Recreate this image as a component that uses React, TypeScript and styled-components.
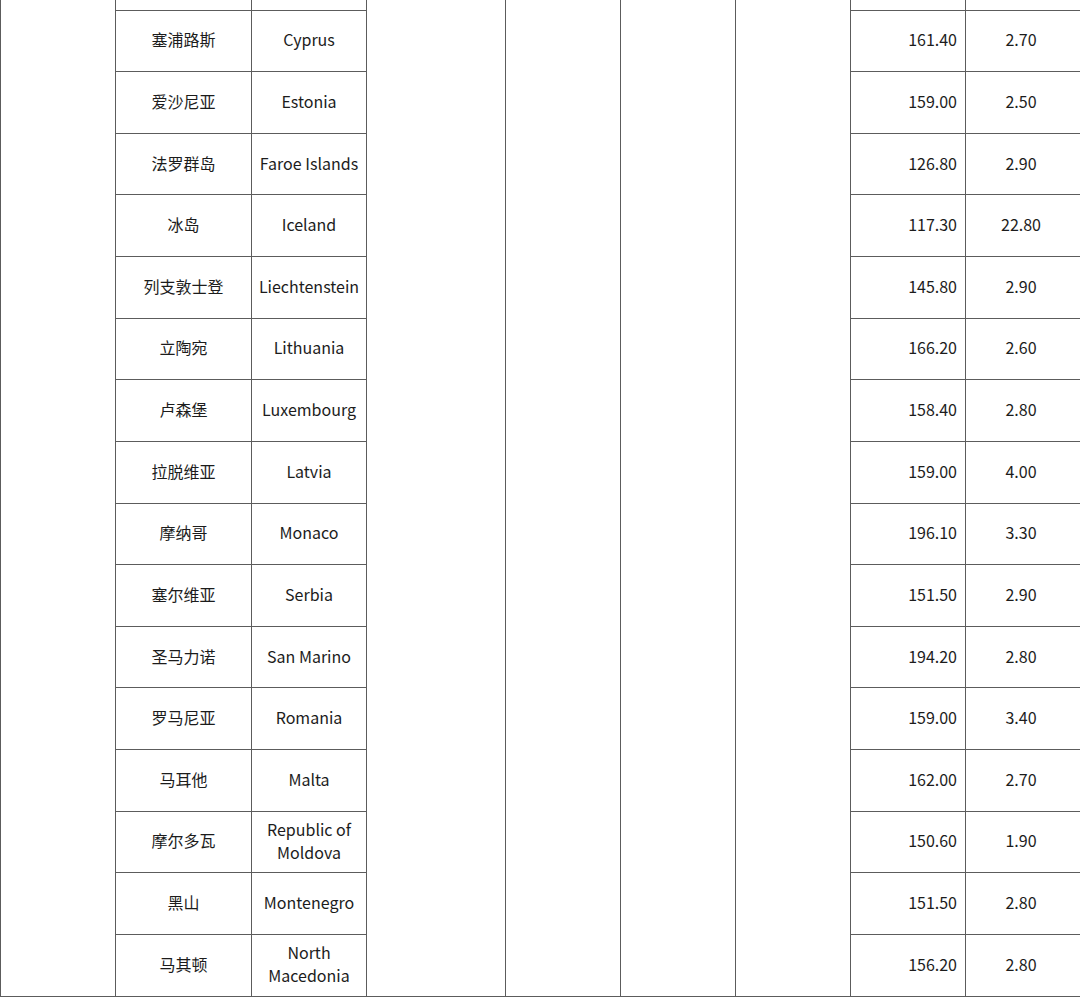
import React from "react";
import styled, { createGlobalStyle } from "styled-components";

const Global = createGlobalStyle`
  html, body {
    margin: 0;
    padding: 0;
    background: #ffffff;
    overflow: hidden;
  }
  body {
    font-family: "Noto Sans CJK SC", "Noto Sans", sans-serif;
    color: #1c1c1c;
  }
`;

const Page = styled.div`
  width: 1080px;
  height: 997px;
  overflow: hidden;
`;

const Table = styled.table`
  border-collapse: collapse;
  table-layout: fixed;
  width: 1080px;
  font-size: 16px;
  line-height: 23px;
`;

const Col = styled.col<{ $w: number }>`
  width: ${(p) => p.$w}px;
`;

const Row = styled.tr<{ $h: number }>`
  height: ${(p) => p.$h}px;
`;

const Cell = styled.td<{ $align?: "center" | "right"; $open?: boolean; $shift?: number }>`
  border: 1px solid #5c5c5c;
  border-top-style: ${(p) => (p.$open ? "none" : "solid")};
  padding: 0 ${(p) => (p.$align === "right" ? 8 : 4 + (p.$shift ?? 0))}px 2px 4px;
  text-align: ${(p) => p.$align ?? "center"};
  vertical-align: middle;
  word-wrap: break-word;
`;

const data: [string, string, string, string][] = [
  ["塞浦路斯", "Cyprus", "161.40", "2.70"],
  ["爱沙尼亚", "Estonia", "159.00", "2.50"],
  ["法罗群岛", "Faroe Islands", "126.80", "2.90"],
  ["冰岛", "Iceland", "117.30", "22.80"],
  ["列支敦士登", "Liechtenstein", "145.80", "2.90"],
  ["立陶宛", "Lithuania", "166.20", "2.60"],
  ["卢森堡", "Luxembourg", "158.40", "2.80"],
  ["拉脱维亚", "Latvia", "159.00", "4.00"],
  ["摩纳哥", "Monaco", "196.10", "3.30"],
  ["塞尔维亚", "Serbia", "151.50", "2.90"],
  ["圣马力诺", "San Marino", "194.20", "2.80"],
  ["罗马尼亚", "Romania", "159.00", "3.40"],
  ["马耳他", "Malta", "162.00", "2.70"],
  ["摩尔多瓦", "Republic of Moldova", "150.60", "1.90"],
  ["黑山", "Montenegro", "151.50", "2.80"],
  ["马其顿", "North Macedonia", "156.20", "2.80"],
];

const widths = [115, 136, 115, 139, 115, 115, 115, 115, 115];
const merged = [true, false, false, true, true, true, true, false, false];

export default function App() {
  const span = data.length + 1;
  return (
    <Page>
      <Global />
      <Table>
        <colgroup>
          {widths.map((w, i) => (
            <Col key={i} $w={w} />
          ))}
        </colgroup>
        <tbody>
          <Row $h={10}>
            {merged.map((m, i) => (
              <Cell key={i} $open rowSpan={m ? span : undefined} />
            ))}
          </Row>
          {data.map(([zh, en, a, b], i) => (
            <Row key={i} $h={61.625}>
              <Cell>{zh}</Cell>
              <Cell>{en}</Cell>
              <Cell $align="right">{a}</Cell>
              <Cell $shift={4}>{b}</Cell>
            </Row>
          ))}
        </tbody>
      </Table>
    </Page>
  );
}
